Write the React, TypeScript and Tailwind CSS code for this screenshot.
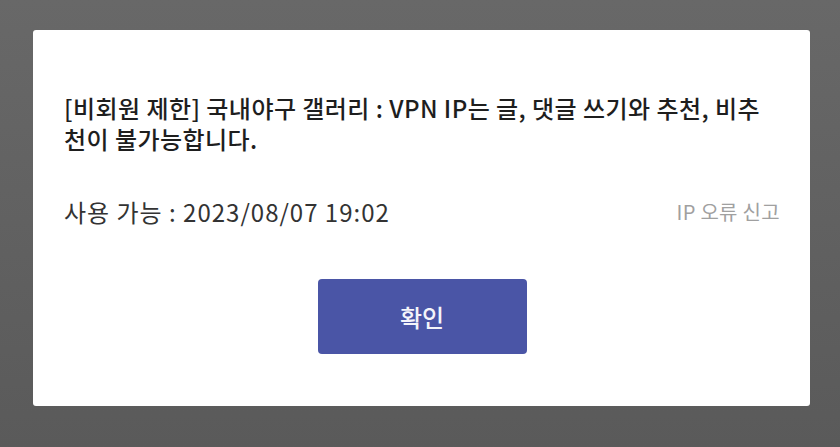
export default function App() {
  return (
    <div
      className="flex h-[447px] w-[840px] items-start bg-linear-to-b from-[#686868] to-[#5a5a5a] pt-[30px] pl-[33px]"
      style={{ fontFamily: '"Noto Sans CJK KR", "Noto Sans", sans-serif' }}
    >
      <div className="flex w-[777px] flex-col rounded-[3px] bg-white pt-[62px] pr-[30px] pb-[52px] pl-[31px]">
        <p className="text-[24px] leading-[31px] font-medium tracking-[0.45px] text-[#1e1e1e]">
          [비회원 제한] 국내야구 갤러리 : VPN IP는 글, 댓글 쓰기와 추천, 비추천이 불가능합니다.
        </p>
        <div className="mt-[43px] flex items-center justify-between">
          <span className="text-[24px] leading-[30px] tracking-[1px] text-[#333333]">
            사용 가능 : 2023/08/07 19:02
          </span>
          <button type="button" className="text-[20px] leading-[30px] tracking-[0.3px] text-[#a0a0a0]">
            IP 오류 신고
          </button>
        </div>
        <div className="mt-[52px] flex justify-center">
          <button
            type="button"
            className="h-[75px] w-[209px] rounded-[4px] bg-[#4a55a6] text-[24px] font-medium text-[#f4f4fa]"
          >
            확인
          </button>
        </div>
      </div>
    </div>
  );
}
